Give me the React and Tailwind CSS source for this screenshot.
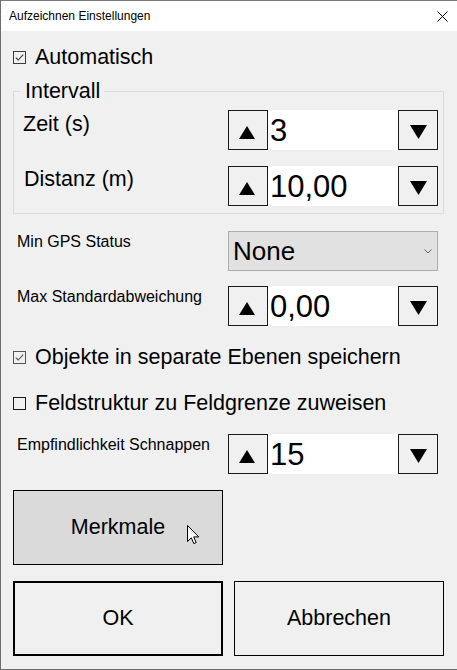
import { useState } from "react";

const font = { fontFamily: '"Liberation Sans", Arial, sans-serif' };

function CheckBox({ checked, tone }) {
  return (
    <svg width="13" height="13" viewBox="0 0 13 13" className="shrink-0">
      <rect x="0.5" y="0.5" width="12" height="12" fill="#ffffff" fillOpacity="0" stroke={tone} />
      {checked && (
        <polyline points="2.8,6.6 5.2,9 10.2,3.6" fill="none" stroke={tone} strokeWidth="1.1" />
      )}
    </svg>
  );
}

function CheckRow({ label, checked, tone, className }) {
  return (
    <div className={"flex h-[26px] items-center " + className}>
      <CheckBox checked={checked} tone={tone} />
      <span className="ml-[9px] text-[21.5px] leading-[26px] text-black">{label}</span>
    </div>
  );
}

function Spinner({ value }) {
  return (
    <div className="flex h-[40px] w-[210px] shrink-0">
      <button className="flex h-[40px] w-[40px] items-center justify-center border border-[#1a1a1a] bg-[#f0f0f0]">
        <svg width="16" height="13" viewBox="0 0 16 13" className="mt-[5px] -ml-[2px]">
          <polygon points="8,0 16,13 0,13" fill="#000" />
        </svg>
      </button>
      <div className="flex h-[40px] flex-1 items-center bg-white pl-[2px] text-[31px] leading-none text-black">
        {value}
      </div>
      <button className="flex h-[40px] w-[40px] items-center justify-center border border-[#1a1a1a] bg-[#f0f0f0]">
        <svg width="17" height="14" viewBox="0 0 17 14" className="mt-[3px]">
          <polygon points="0,0 17,0 8.5,14" fill="#000" />
        </svg>
      </button>
    </div>
  );
}

export default function App() {
  const [auto] = useState(true);

  return (
    <div
      className="flex h-[670px] w-[457px] flex-col overflow-hidden border-b border-l border-[#6d6d6d] bg-[#f0f0f0]"
      style={font}
    >
      <div className="flex h-[31px] shrink-0 items-center justify-between border-t border-[#7a7a7a] bg-white pl-[8px] pr-[9px]">
        <span className="text-[12px] text-black">Aufzeichnen Einstellungen</span>
        <svg width="11" height="11" viewBox="0 0 11 11">
          <path d="M0.5 0.5 L10.5 10.5 M10.5 0.5 L0.5 10.5" stroke="#000" strokeWidth="1" />
        </svg>
      </div>

      <div className="flex flex-col pl-[12px] pr-[13px]">
        <CheckRow label="Automatisch" checked={auto} tone="#3c3c3c" className="mt-[13px]" />

        <fieldset className="mt-[8px] border border-[#dcdcdc] pb-[7px] pr-[5px]">
          <legend className="ml-[6px] h-[26px] pl-[5px] pr-[4px] text-[21.5px] leading-[26px] text-black">
            Intervall
          </legend>
          <div className="mt-[6px] flex h-[40px] items-start">
            <span className="flex-1 pl-[9px] pt-[2px] text-[21.5px] leading-[25px]">Zeit (s)</span>
            <Spinner value="3" />
          </div>
          <div className="mt-[16px] flex h-[40px] items-start">
            <span className="flex-1 pl-[10px] pt-[1px] text-[21.5px] leading-[25px]">Distanz (m)</span>
            <Spinner value="10,00" />
          </div>
        </fieldset>

        <div className="mt-[17px] flex h-[40px] items-start pr-[6px]">
          <span className="flex-1 pl-[4px] pt-[1px] text-[16px] leading-[19px]">Min GPS Status</span>
          <div className="flex h-[40px] w-[210px] items-center justify-between border border-[#adadad] bg-[#e1e1e1] pl-[4px] pr-[5px]">
            <span className="text-[26px] leading-none text-black">None</span>
            <svg width="8" height="5" viewBox="0 0 8 5">
              <polyline points="0.5,0.5 4,4 7.5,0.5" fill="none" stroke="#606060" strokeWidth="1" />
            </svg>
          </div>
        </div>

        <div className="mt-[15px] flex h-[40px] items-start pr-[6px]">
          <span className="flex-1 pl-[4px] pt-[1px] text-[16px] leading-[19px]">Max Standardabweichung</span>
          <Spinner value="0,00" />
        </div>

        <CheckRow
          label="Objekte in separate Ebenen speichern"
          checked
          tone="#555555"
          className="mt-[18px]"
        />
        <CheckRow
          label="Feldstruktur zu Feldgrenze zuweisen"
          checked={false}
          tone="#1a1a1a"
          className="mt-[20px]"
        />

        <div className="mt-[18px] flex h-[40px] items-start pr-[6px]">
          <span className="flex-1 pl-[4px] pt-[1px] text-[16px] leading-[19px]">Empfindlichkeit Schnappen</span>
          <Spinner value="15" />
        </div>

        <button className="relative mt-[16px] flex h-[75px] w-[210px] items-center justify-center border border-black bg-[#dadada] text-[21.5px] text-black">
          Merkmale
          <svg
            width="13"
            height="20"
            viewBox="0 0 13 20"
            className="absolute left-[173px] top-[34px]"
          >
            <path
              d="M0.5 0.5 L0.5 16.5 L4.3 12.8 L6.8 18.6 L9.2 17.6 L6.7 11.9 L11.8 11.9 Z"
              fill="#fff"
              stroke="#000"
              strokeWidth="1"
              strokeLinejoin="miter"
            />
          </svg>
        </button>

        <div className="mt-[16px] flex gap-[11px]">
          <button className="flex h-[75px] w-[210px] items-center justify-center border-2 border-black bg-[#f0f0f0] text-[21.5px] text-black">
            OK
          </button>
          <button className="flex h-[75px] w-[210px] items-center justify-center border border-black bg-[#f0f0f0] text-[21.5px] text-black">
            Abbrechen
          </button>
        </div>
      </div>
    </div>
  );
}
